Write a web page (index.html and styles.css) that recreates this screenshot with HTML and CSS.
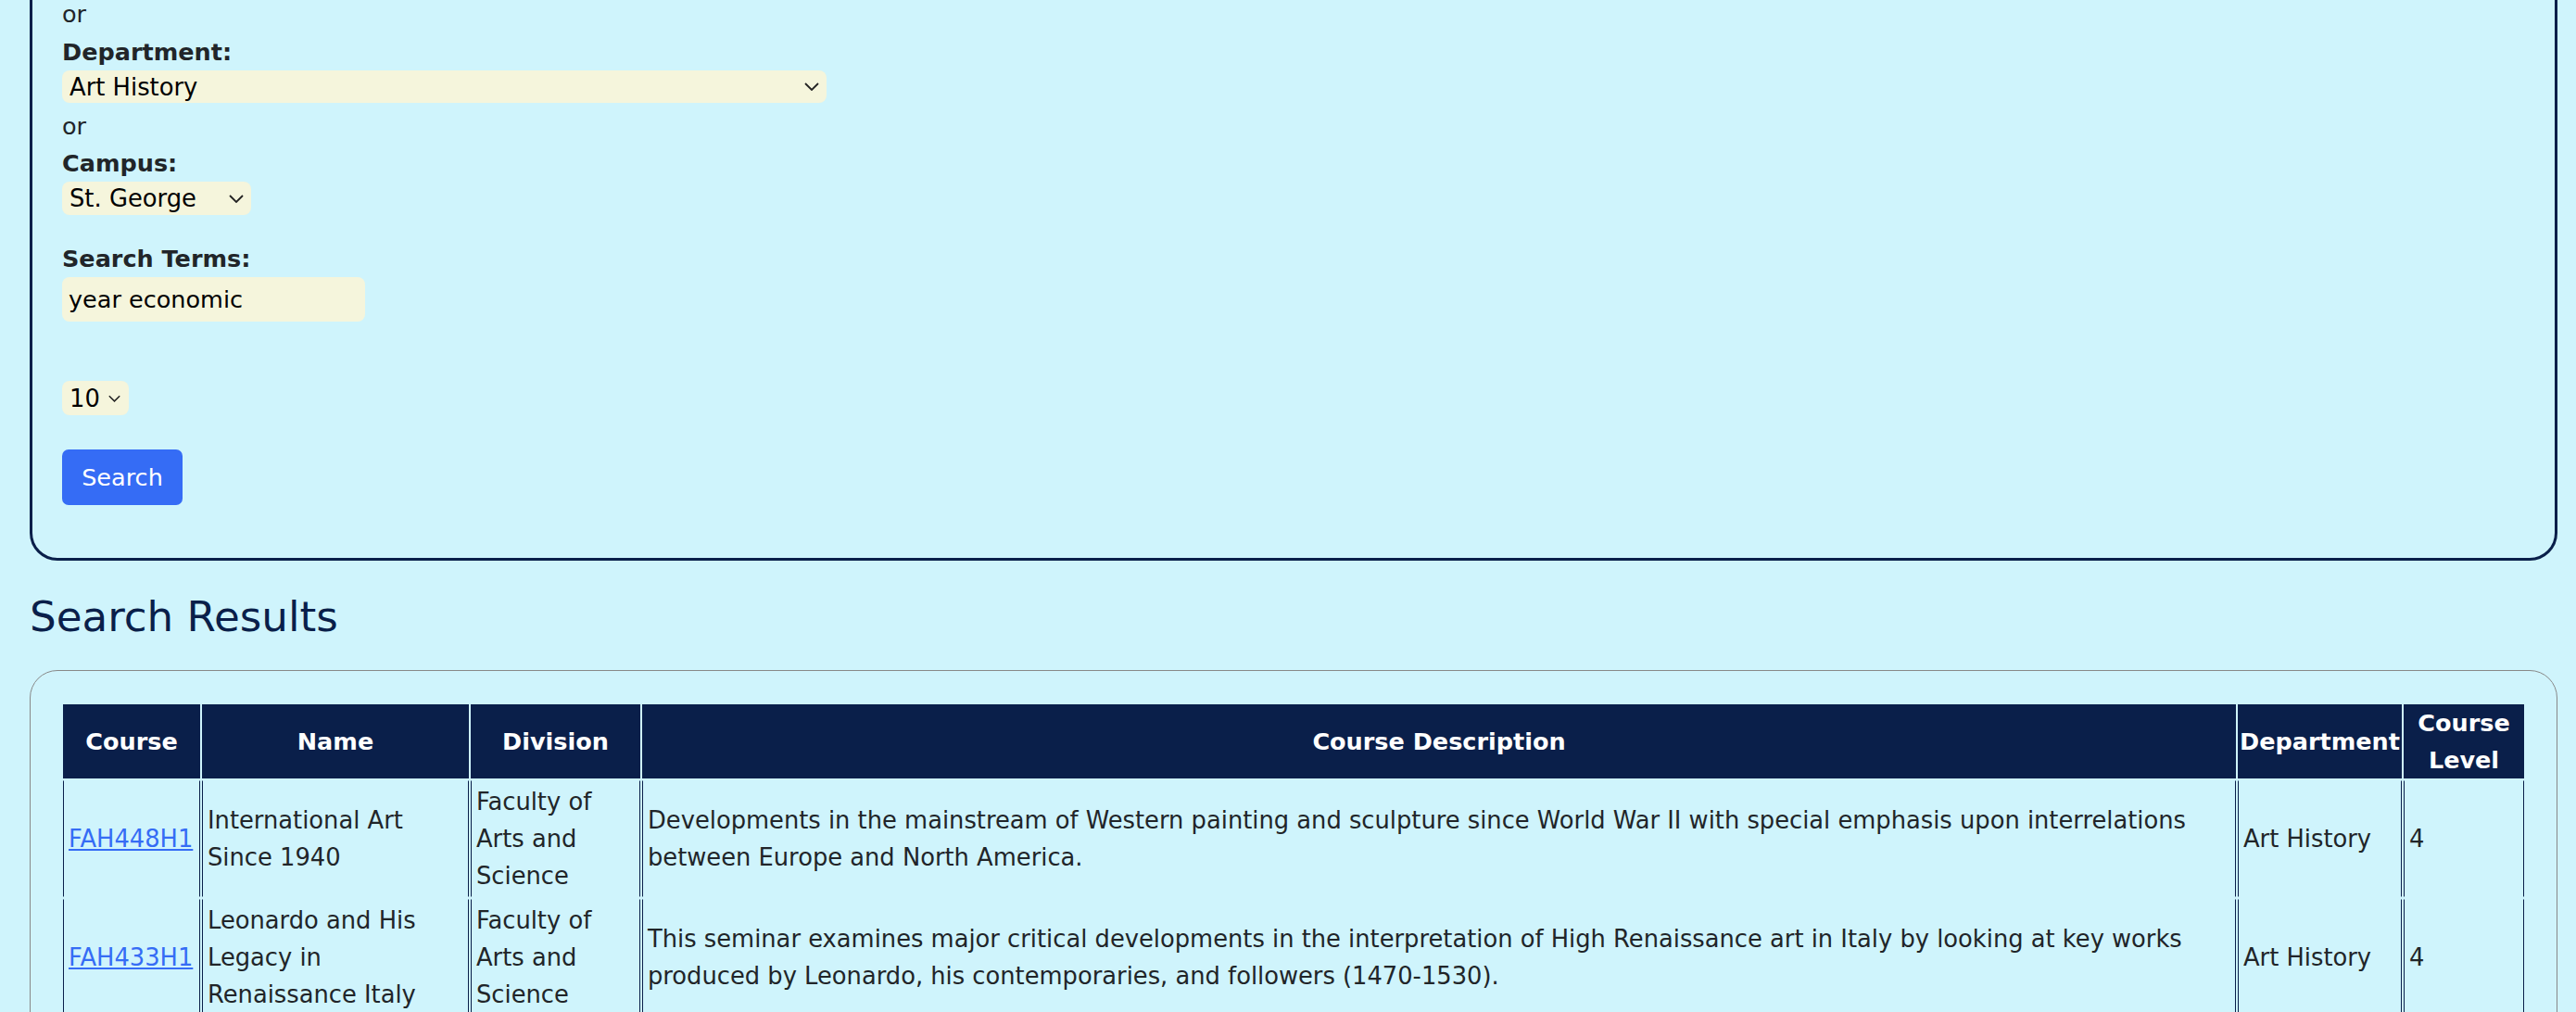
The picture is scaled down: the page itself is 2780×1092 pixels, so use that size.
FILE: index.html
```html
<!DOCTYPE html>
<html lang="en">
<head>
<meta charset="utf-8">
<title>Course Search</title>
<link rel="stylesheet" href="styles.css">
</head>
<body>
<div class="page">
  <form class="search-panel">
    <div class="or or-first">or</div>
    <label class="lbl" for="dept">Department:</label>
    <select id="dept" class="sel sel-dept"><option>Art History</option></select>
    <div class="or">or</div>
    <label class="lbl" for="campus">Campus:</label>
    <select id="campus" class="sel sel-campus"><option>St. George</option></select>
    <label class="lbl lbl-terms" for="terms">Search Terms:</label>
    <input id="terms" class="txt" type="text" value="year economic">
    <select class="sel sel-num"><option>10</option></select>
    <button type="button" class="btn">Search</button>
  </form>

  <h2 class="results-title">Search Results</h2>

  <div class="results-panel">
    <table class="results">
      <colgroup>
        <col class="c-course">
        <col class="c-name">
        <col class="c-div">
        <col class="c-desc">
        <col class="c-dept">
        <col class="c-level">
      </colgroup>
      <thead>
        <tr>
          <th>Course</th>
          <th>Name</th>
          <th>Division</th>
          <th>Course Description</th>
          <th>Department</th>
          <th>Course Level</th>
        </tr>
      </thead>
      <tbody>
        <tr>
          <td><a href="#">FAH448H1</a></td>
          <td>International Art Since 1940</td>
          <td>Faculty of Arts and Science</td>
          <td>Developments in the mainstream of Western painting and sculpture since World War II with special emphasis upon interrelations between Europe and North America.</td>
          <td>Art History</td>
          <td>4</td>
        </tr>
        <tr>
          <td><a href="#">FAH433H1</a></td>
          <td>Leonardo and His Legacy in Renaissance Italy</td>
          <td>Faculty of Arts and Science</td>
          <td>This seminar examines major critical developments in the interpretation of High Renaissance art in Italy by looking at key works produced by Leonardo, his contemporaries, and followers (1470-1530).</td>
          <td>Art History</td>
          <td>4</td>
        </tr>
      </tbody>
    </table>
  </div>
</div>
</body>
</html>
```

FILE: styles.css
```css
html, body {
  margin: 0;
  padding: 0;
}

body {
  background: #cff4fc;
  color: #212529;
  font-family: "DejaVu Sans", Verdana, sans-serif;
  font-size: 25.5px;
  line-height: 40px;
  overflow: hidden;
}

.page {
  padding: 0 20px 0 32px;
}

.search-panel {
  display: flex;
  flex-direction: column;
  align-items: flex-start;
  margin-top: -40px;
  padding: 32px 32px 57px 32px;
  border: 3px solid #0a1f4a;
  border-radius: 30px;
}

.or {
  height: 40px;
}

.or-first {
  margin-bottom: 1px;
}

.lbl {
  display: block;
  font-weight: bold;
  height: 40px;
}

.lbl-terms {
  margin-top: 27px;
}

.sel {
  appearance: none;
  -webkit-appearance: none;
  margin: 0;
  border: 0;
  border-radius: 8px;
  background-color: #f5f5dc;
  background-image: url("data:image/svg+xml,%3Csvg xmlns='http://www.w3.org/2000/svg' width='16' height='9' viewBox='0 0 16 9'%3E%3Cpath d='M1 1l7 7 7-7' fill='none' stroke='%23222' stroke-width='1.8'/%3E%3C/svg%3E");
  background-repeat: no-repeat;
  background-position: right 8px center;
  background-size: 16px 9px;
  color: #000;
  font-family: "DejaVu Sans", Verdana, sans-serif;
  font-size: 25.8px;
  line-height: 30px;
  padding: 0 30px 0 8px;
}

.sel-dept {
  width: 825px;
  height: 35px;
  margin-bottom: 5px;
}

.sel-campus {
  width: 204px;
  height: 36px;
}

.sel-num {
  width: 72px;
  height: 37px;
  margin-top: 64px;
  background-size: 13px 8px;
  background-position: right 9px center;
}

.txt {
  box-sizing: border-box;
  width: 327px;
  height: 48px;
  margin: 0;
  border: 0;
  border-radius: 8px;
  background: #f5f5dc;
  color: #000;
  font-family: "DejaVu Sans", Verdana, sans-serif;
  font-size: 25.5px;
  padding: 0 7px;
  outline: none;
}

.btn {
  margin-top: 37px;
  width: 130px;
  height: 60px;
  border: 0;
  border-radius: 7px;
  background: #356cf5;
  color: #fff;
  font-family: "DejaVu Sans", Verdana, sans-serif;
  font-size: 25.5px;
  line-height: 40px;
  padding: 0;
}

.results-title {
  margin: 34px 0 31px 0;
  font-size: 45.2px;
  line-height: 53px;
  font-weight: normal;
  color: #0a1f4a;
}

.results-panel {
  border: 1px solid #888;
  border-radius: 30px;
  padding: 36px 33px 33px 33px;
}

.results {
  width: 100%;
  table-layout: fixed;
  border-collapse: separate;
  border-spacing: 2px;
  margin: -2px 0 0 0;
}

.c-course { width: 148px; }
.c-name { width: 288px; }
.c-div { width: 183px; }
.c-dept { width: 177px; }
.c-level { width: 130px; }

.results th {
  background: #0a1f4a;
  color: #fff;
  font-weight: bold;
  text-align: center;
  vertical-align: middle;
  padding: 0 2px;
  height: 80px;
  border: 0;
}

.results td {
  border-left: 1px solid #0a1f4a;
  border-right: 1px solid #0a1f4a;
  border-top: 1px solid transparent;
  border-bottom: 1px solid transparent;
  padding: 2px 5px;
  vertical-align: middle;
  text-align: left;
  font-size: 25.75px;
}

.results a {
  color: #356cf5;
  text-decoration: underline;
}
```
